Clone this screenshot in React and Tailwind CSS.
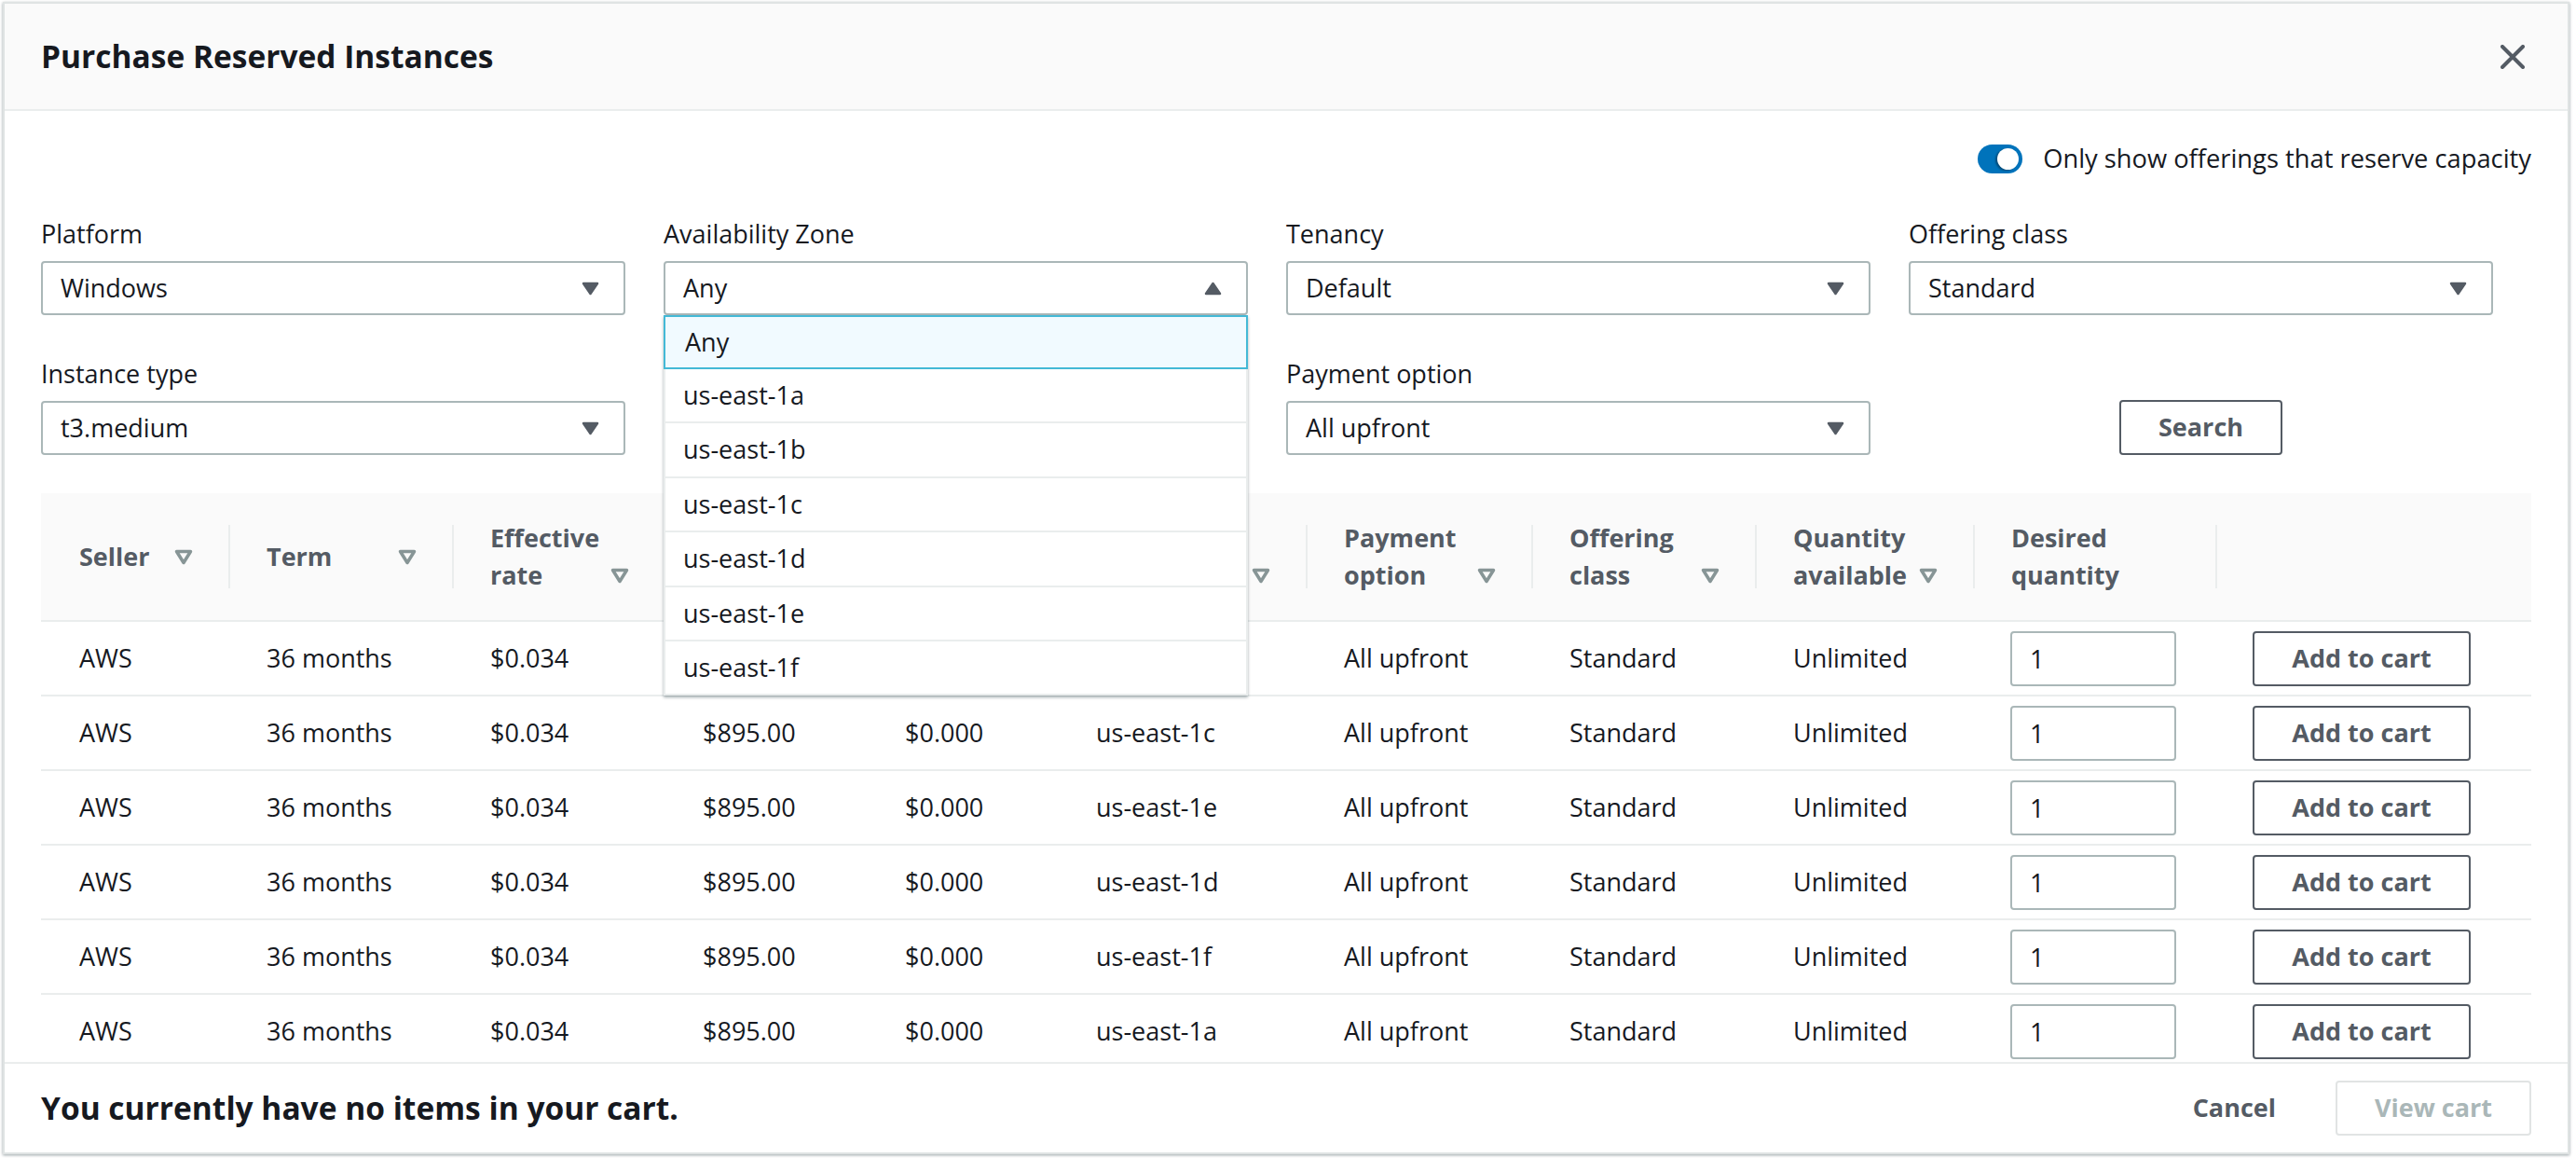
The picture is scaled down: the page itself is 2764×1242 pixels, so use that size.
import clsx from 'clsx'

const ZONES = ['Any', 'us-east-1a', 'us-east-1b', 'us-east-1c', 'us-east-1d', 'us-east-1e', 'us-east-1f']

const COLUMNS = [
  { label: ['Seller'], sort: true },
  { label: ['Term'], sort: true },
  { label: ['Effective', 'rate'], sort: true },
  { label: ['Upfront', 'price'], sort: true },
  { label: ['Hourly', 'rate'], sort: true },
  { label: ['Availability', 'Zone'], sort: true },
  { label: ['Payment', 'option'], sort: true },
  { label: ['Offering', 'class'], sort: true },
  { label: ['Quantity', 'available'], sort: true },
  { label: ['Desired', 'quantity'], sort: false },
  { label: [], sort: false },
]

const ROW_ZONES = ['us-east-1b', 'us-east-1c', 'us-east-1e', 'us-east-1d', 'us-east-1f', 'us-east-1a']

const GRID = 'grid grid-cols-[201px_240px_228px_217px_205px_266px_242px_240px_234px_260px_339px]'

function Caret({ up }) {
  return (
    <svg width="19" height="15" viewBox="0 0 19 15" className={clsx(up && 'rotate-180')}>
      <path d="M2 2 H17 L9.5 13 Z" fill="#545b64" stroke="#545b64" strokeWidth="2.5" strokeLinejoin="round" />
    </svg>
  )
}

function SortIcon() {
  return (
    <svg width="20" height="17" viewBox="0 0 20 17" className="shrink-0">
      <path d="M2.5 2.5 H17.5 L10 14.5 Z" fill="none" stroke="#879596" strokeWidth="3.5" strokeLinejoin="round" />
    </svg>
  )
}

function Select({ value, open }) {
  return (
    <div className="flex h-[58px] items-center justify-between rounded-[4px] border-2 border-[#aab7b8] bg-white pl-[19px] pr-[26px]">
      <span>{value}</span>
      <Caret up={open} />
    </div>
  )
}

function Field({ label, value, open, children }) {
  return (
    <div className="relative">
      <div className="mb-[9px] leading-[40px]">{label}</div>
      <Select value={value} open={open} />
      {children}
    </div>
  )
}

function ZoneMenu() {
  return (
    <div className="absolute left-0 top-full z-10 w-full border-x-2 border-[#eaeded] bg-white shadow-[0_2px_3px_rgba(0,28,36,0.35)]">
      {ZONES.map((zone, i) => (
        <div
          key={zone}
          className={clsx(
            'flex items-center pl-[19px]',
            i === 0
              ? '-mx-[2px] h-[58px] border-2 border-[#44b9d6] bg-[#f1faff] pl-[21px]'
              : 'h-[58.4px] border-b-2 border-[#eaeded]',
            i === ZONES.length - 1 && 'border-b-0'
          )}
        >
          {zone}
        </div>
      ))}
    </div>
  )
}

export default function App() {
  return (
    <div className="h-[1242px] w-[2764px] overflow-hidden bg-white pl-[3px] pt-[2px] font-['Open_Sans','Noto_Sans',sans-serif] text-[27px] text-[#16191f]">
      <div className="flex h-[1236px] w-[2754px] flex-col border-2 border-[#dfe3e3] bg-white shadow-[0_1px_3px_rgba(0,28,36,0.4)]">
        <header className="flex h-[115px] shrink-0 items-center justify-between border-b-2 border-[#eaeded] bg-[#fafafa] pl-[39px] pr-[46px]">
          <h1 className="text-[33.5px] font-bold">Purchase Reserved Instances</h1>
          <svg width="26" height="26" viewBox="0 0 26 26">
            <path d="M2 2 L24 24 M24 2 L2 24" stroke="#545b64" strokeWidth="4" strokeLinecap="round" />
          </svg>
        </header>

        <div className="flex-1 overflow-hidden px-[39px]">
          <div className="mt-[35px] flex h-[32px] items-center justify-end gap-[22px]">
            <div className="flex h-[31px] w-[48px] items-center justify-end rounded-full bg-[#0073bb] pr-[4px]">
              <div className="h-[23px] w-[23px] rounded-full bg-white shadow-[-2px_1px_2px_rgba(0,0,0,0.35)]" />
            </div>
            <span className="text-[27.3px]">Only show offerings that reserve capacity</span>
          </div>

          <div className="mt-[45px] grid grid-cols-4 gap-x-[41px] gap-y-[43px] pr-[41px]">
            <Field label="Platform" value="Windows" />
            <Field label="Availability Zone" value="Any" open>
              <ZoneMenu />
            </Field>
            <Field label="Tenancy" value="Default" />
            <Field label="Offering class" value="Standard" />
            <Field label="Instance type" value="t3.medium" />
            <div />
            <Field label="Payment option" value="All upfront" />
            <div className="flex items-end justify-center">
              <button className="h-[59px] w-[175px] rounded-[4px] border-2 border-[#545b64] bg-white font-bold text-[#545b64]">
                Search
              </button>
            </div>
          </div>

          <div className="mt-[41px]">
            <div className={clsx(GRID, 'h-[138px] border-b-2 border-[#eaeded] bg-[#fafafa] font-bold text-[#545b64]')}>
              {COLUMNS.map((col, i) => (
                <div key={i} className="flex items-center">
                  <div
                    className={clsx(
                      'flex h-[68px] w-full items-center justify-between border-l-2 pl-[39px] pr-[38px]',
                      i === 0 ? 'border-transparent' : 'border-[#eaeded]'
                    )}
                  >
                    <div className="flex w-full items-end justify-between leading-[40px]">
                      <div>
                        {col.label.map((line) => (
                          <div key={line}>{line}</div>
                        ))}
                      </div>
                      {col.sort && (
                        <div className="flex h-[40px] items-center">
                          <SortIcon />
                        </div>
                      )}
                    </div>
                  </div>
                </div>
              ))}
            </div>

            {ROW_ZONES.map((zone, i) => (
              <div key={i} className={clsx(GRID, 'h-[80px] shrink-0 items-center border-b-2 border-[#eaeded]')}>
                <div className="pl-[41px]">AWS</div>
                <div className="pl-[41px]">36 months</div>
                <div className="pl-[41px]">$0.034</div>
                <div className="pl-[41px]">$895.00</div>
                <div className="pl-[41px]">$0.000</div>
                <div className="pl-[41px]">{zone}</div>
                <div className="pl-[41px]">All upfront</div>
                <div className="pl-[41px]">Standard</div>
                <div className="pl-[41px]">Unlimited</div>
                <div className="pl-[40px]">
                  <input
                    defaultValue="1"
                    className="h-[59px] w-[178px] rounded-[4px] border-2 border-[#aab7b8] bg-white pl-[19px] outline-none"
                  />
                </div>
                <div className="pl-[40px]">
                  <button className="h-[59px] w-[234px] rounded-[4px] border-2 border-[#545b64] bg-white font-bold text-[#545b64]">
                    Add to cart
                  </button>
                </div>
              </div>
            ))}
          </div>
        </div>

        <footer className="flex h-[97px] shrink-0 items-center justify-between border-t-2 border-[#eaeded] pl-[39px] pr-[39px]">
          <p className="text-[33.5px] font-bold">You currently have no items in your cart.</p>
          <div className="flex items-center gap-[64px]">
            <button className="font-bold text-[#545b64]">Cancel</button>
            <button className="h-[59px] w-[210px] rounded-[4px] border-2 border-[#e1e4e4] bg-white font-bold text-[#aab7b8]">
              View cart
            </button>
          </div>
        </footer>
      </div>
    </div>
  )
}
